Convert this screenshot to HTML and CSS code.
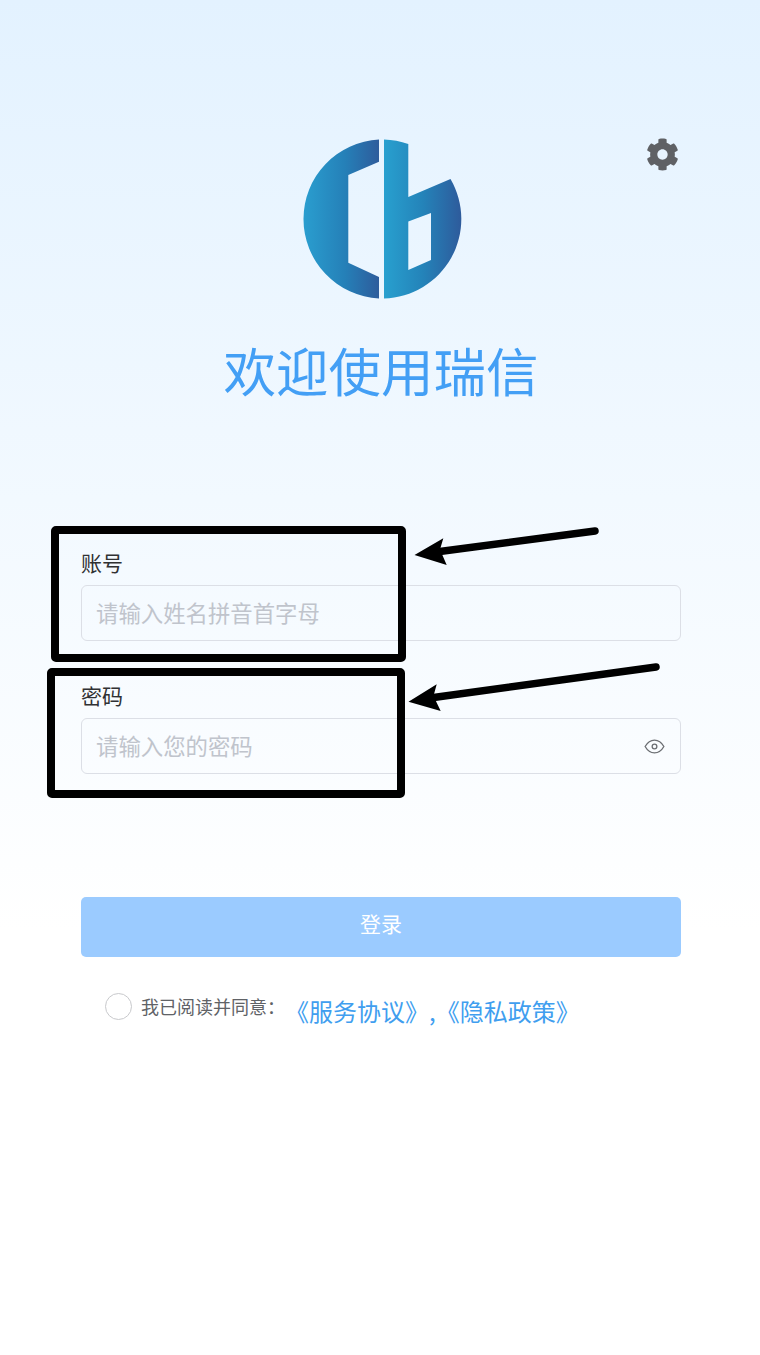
FILE: index.html
```html
<!DOCTYPE html>
<html lang="zh-CN">
<head>
<meta charset="utf-8">
<title>欢迎使用瑞信</title>
<link rel="stylesheet" href="styles.css">
</head>
<body>
<div class="page">
  <header class="hero">
    <div class="hero-top">
      <svg class="logo" viewBox="0 0 160 160" aria-label="logo">
        <defs>
          <linearGradient id="gl" gradientUnits="userSpaceOnUse" x1="0" y1="0" x2="78" y2="0">
            <stop offset="0" stop-color="#2a9fd0"/>
            <stop offset="0.55" stop-color="#2580b8"/>
            <stop offset="1" stop-color="#2e5b9b"/>
          </linearGradient>
          <linearGradient id="gr" gradientUnits="userSpaceOnUse" x1="82" y1="0" x2="160" y2="0">
            <stop offset="0" stop-color="#28a0cf"/>
            <stop offset="0.5" stop-color="#2483b9"/>
            <stop offset="1" stop-color="#2e5a9b"/>
          </linearGradient>
        </defs>
        <path fill="url(#gl)" d="M77 .6A79.5 79.5 0 0 0 77 159.4V138L46.3 123.7V36L77 22.7Z"/>
        <path fill="url(#gr)" fill-rule="evenodd" d="M82 .5A79.5 79.5 0 0 1 106.3 5V58L148.5 40A79.5 79.5 0 0 1 82 159.5ZM106.3 82.6V131L129 121V74Z"/>
      </svg>
      <svg class="gear" viewBox="0 0 512 512" aria-label="设置"><path d="M487.4 315.7l-42.6-24.6c4.3-23.2 4.3-47 0-70.2l42.6-24.6c4.9-2.8 7.1-8.6 5.5-14-11.1-35.6-30-67.8-54.7-94.6-3.8-4.1-10-5.1-14.8-2.3L380.8 110c-17.9-15.4-38.5-27.3-60.8-35.1V25.8c0-5.6-3.9-10.5-9.4-11.7-36.7-8.2-74.3-7.8-109.2 0-5.5 1.2-9.4 6.1-9.4 11.7V75c-22.2 7.9-42.8 19.8-60.8 35.1L88.7 85.5c-4.9-2.8-11-1.9-14.8 2.3-24.7 26.7-43.6 58.9-54.7 94.6-1.7 5.4.6 11.2 5.5 14L67.3 221c-4.3 23.2-4.3 47 0 70.2l-42.6 24.6c-4.9 2.8-7.1 8.6-5.5 14 11.1 35.6 30 67.8 54.7 94.6 3.8 4.1 10 5.1 14.8 2.3l42.6-24.6c17.9 15.4 38.5 27.3 60.8 35.1v49.2c0 5.6 3.9 10.5 9.4 11.7 36.7 8.2 74.3 7.8 109.2 0 5.5-1.2 9.4-6.1 9.4-11.7v-49.2c22.2-7.9 42.8-19.8 60.8-35.1l42.6 24.6c4.9 2.8 11 1.9 14.8-2.3 24.7-26.7 43.6-58.9 54.7-94.6 1.5-5.5-.7-11.3-5.6-14.1zM256 336c-44.1 0-80-35.9-80-80s35.9-80 80-80 80 35.9 80 80-35.9 80-80 80z"/></svg>
    </div>
    <h1 class="title">欢迎使用瑞信</h1>
  </header>

  <main class="form">
    <div class="field field-account">
      <label class="label">账号</label>
      <div class="input"><span class="placeholder">请输入姓名拼音首字母</span></div>
    </div>
    <div class="field field-password">
      <label class="label">密码</label>
      <div class="input">
        <span class="placeholder">请输入您的密码</span>
        <svg class="eye" viewBox="0 0 22 16" aria-label="显示密码">
          <path d="M1 8C3.5 3.6 7 1.2 11 1.2S18.500 3.600 21 8C18.500 12.400 15 14.800 11 14.800S3.500 12.400 1 8Z"/>
          <circle cx="11" cy="8" r="2.500"/>
        </svg>
      </div>
    </div>
    <button class="submit" type="button">登录</button>
    <div class="agree">
      <span class="radio"></span>
      <span class="agree-text">我已阅读并同意：</span>
      <span class="agree-links">《服务协议》,《隐私政策》</span>
    </div>
  </main>

  <div class="mark mark-account"></div>
  <div class="mark mark-password"></div>
  <svg class="arrows" viewBox="0 0 760 1355">
    <path class="shaft" d="M595 531L436 552"/>
    <path class="head" d="M414.500 555L443.300 538.300L440 549.500L446.700 565Z"/>
    <path class="shaft" d="M656 667L430 698"/>
    <path class="head" d="M408.500 701.700L436.700 684.300L433.500 696L440.700 711Z"/>
  </svg>
</div>
</body>
</html>
```

FILE: styles.css
```css
* { box-sizing: border-box; }
html, body { margin: 0; padding: 0; }
body {
  font-family: "Noto Sans CJK SC", "Noto Sans", sans-serif;
  background: #fff;
}
.page {
  position: relative;
  width: 760px;
  height: 1355px;
  overflow: hidden;
  background: linear-gradient(180deg, #e3f2ff 0, #ffffff 930px);
}
.hero { padding-top: 139px; }
.hero-top {
  display: grid;
  grid-template-columns: 1fr 160px 1fr;
  align-items: start;
}
.logo {
  grid-column: 2;
  display: block;
  width: 160px;
  height: 160px;
  margin-left: 1.5px;
}
.gear {
  grid-column: 3;
  justify-self: end;
  width: 33px;
  height: 33px;
  margin-right: 81px;
  margin-top: -1px;
  fill: #5f6165;
}
.title {
  margin: 32px 0 0;
  text-align: center;
  font-size: 52.5px;
  line-height: 76px;
  font-weight: 400;
  color: #439ff5;
  padding-left: 2px;
}
.form {
  padding: 140px 79px 0 81px;
}
.field { display: flex; flex-direction: column; }
.field-account { height: 133px; }
.label {
  font-size: 21px;
  line-height: 30px;
  color: #303133;
  margin-bottom: 8px;
}
.input {
  display: flex;
  align-items: center;
  justify-content: space-between;
  height: 56px;
  padding: 0 15px 0 14px;
  border: 1px solid #dcdfe6;
  border-radius: 6px;
}
.placeholder {
  font-size: 22.4px;
  line-height: 30px;
  padding-bottom: 3px;
  color: #c0c4cc;
}
.eye {
  width: 21px;
  height: 15px;
  fill: none;
  stroke: #6b6e72;
  stroke-width: 1.400;
}
.submit {
  display: block;
  width: 600px;
  height: 60px;
  margin: 123px 0 0;
  padding: 0 0 8px;
  border: 0;
  border-radius: 5px;
  background: #9bcbff;
  color: #fff;
  font-family: inherit;
  font-size: 21px;
}
.agree {
  display: flex;
  align-items: center;
  margin: 35px 0 0 24px;
  height: 28px;
}
.radio {
  width: 27px;
  height: 27px;
  border: 1px solid #c8c9cc;
  border-radius: 50%;
  background: #fff;
}
.agree-text {
  margin-left: 9px;
  font-size: 18px;
  color: #606266;
}
.agree-links {
  margin: 9px 0 0 0;
  font-size: 24px;
  color: #409eef;
}
.mark {
  position: absolute;
  border: 8px solid #000;
  border-radius: 5px;
}
.mark-account { left: 51px; top: 526px; width: 355px; height: 136px; }
.mark-password { left: 47px; top: 668px; width: 358px; height: 130px; }
.arrows {
  position: absolute;
  left: 0;
  top: 0;
  width: 760px;
  height: 1355px;
  pointer-events: none;
}
.shaft { stroke: #000; stroke-width: 7.500; stroke-linecap: round; fill: none; }
.head { fill: #000; }
```
